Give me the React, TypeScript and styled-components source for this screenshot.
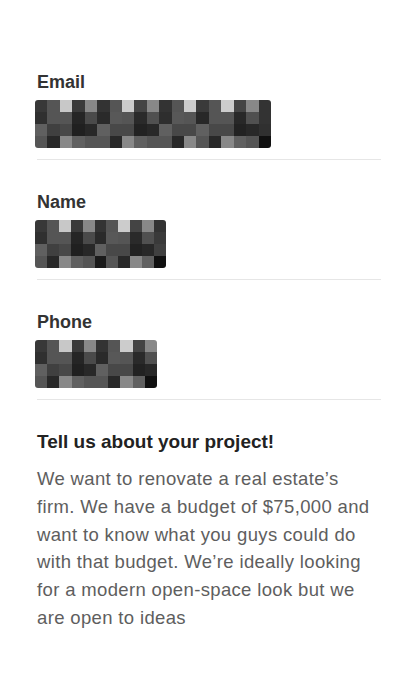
import React from 'react';
import styled, { createGlobalStyle } from 'styled-components';

const GlobalStyle = createGlobalStyle`
  html, body {
    margin: 0;
    padding: 0;
    background: #ffffff;
  }
  body {
    font-family: "Liberation Sans", Arial, Helvetica, sans-serif;
    -webkit-font-smoothing: antialiased;
  }
`;

// grey values read off the redacted mosaic, one string per row
const EMAIL = [
   '38 55 c8 3a 88 33 55 cc 44 88 33 55 cc 3a 55 cc 44 88 33',
   '30 55 55 25 4a 2a 58 55 2a 50 2e 58 55 28 55 55 28 50 33',
   '60 40 48 20 28 60 48 48 22 28 60 48 48 60 48 48 22 28 30',
   '55 28 88 60 55 55 28 88 60 55 55 28 88 55 28 88 60 55 10',
];

const NAME = [
   '38 55 c8 3a 88 33 55 cc 44 88 33',
   '30 55 55 25 4a 2a 58 55 2a 50 3a',
   '60 40 48 20 28 60 48 48 22 28 40',
   '55 28 88 60 55 1a 55 28 88 60 10',
];

const PHONE = [
   '38 55 c8 3a 88 33 55 cc 44 88',
   '30 55 55 25 4a 2a 58 55 2a 50',
   '60 40 48 20 28 60 48 48 22 28',
   '55 28 88 60 55 55 28 88 60 10',
];

const fields = [
   { label: 'Email', rows: EMAIL, width: 236 },
   { label: 'Name', rows: NAME, width: 131 },
   { label: 'Phone', rows: PHONE, width: 122 },
];

const App = () => {
   return (
      <Page>
         <GlobalStyle />
         {fields.map(f => (
            <Field key={f.label}>
               <Label>{f.label}</Label>
               <Mosaic $cols={f.rows[0].split(' ').length} $width={f.width}>
                  {f.rows.map((row, r) =>
                     row.split(' ').map((hex, c) => (
                        <Cell key={`${r}-${c}`} $shade={`#${hex}${hex}${hex}`} />
                     ))
                  )}
               </Mosaic>
            </Field>
         ))}

         <Project>
            <ProjectTitle>Tell us about your project!</ProjectTitle>
            <ProjectText>
               We want to renovate a real estate’s firm. We have a budget of $75,000 and want to know
               what you guys could do with that budget. We’re ideally looking for a modern open-space
               look but we are open to ideas
            </ProjectText>
         </Project>
      </Page>
   );
};

export default App;

const Page = styled.div`
   padding: 40px 39px 40px 37px;
   display: flex;
   flex-direction: column;
`;

const Field = styled.section`
   display: flex;
   flex-direction: column;
   align-items: flex-start;
   padding-top: 32px;
   padding-bottom: 11px;
   border-bottom: 1px solid #e6e6e6;
`;

const Label = styled.div`
   font-size: 18px;
   line-height: 20px;
   font-weight: 700;
   color: #333333;
   margin-bottom: 8px;
`;

const Mosaic = styled.div<{ $cols: number; $width: number }>`
   display: grid;
   grid-template-columns: repeat(${p => p.$cols}, 1fr);
   grid-template-rows: repeat(4, 12px);
   width: ${p => p.$width}px;
   margin-left: -2px;
   border-radius: 3px;
   overflow: hidden;
   filter: blur(0.4px);
`;

const Cell = styled.div<{ $shade: string }>`
   background: ${p => p.$shade};
`;

const Project = styled.section`
   padding-top: 32px;
   display: flex;
   flex-direction: column;
`;

const ProjectTitle = styled.h2`
   margin: 0 0 13px;
   font-size: 19px;
   line-height: 20px;
   font-weight: 700;
   color: #222222;
`;

const ProjectText = styled.p`
   margin: 0;
   font-size: 18.5px;
   line-height: 27.8px;
   letter-spacing: 0.35px;
   color: #5e5e5e;
`;
